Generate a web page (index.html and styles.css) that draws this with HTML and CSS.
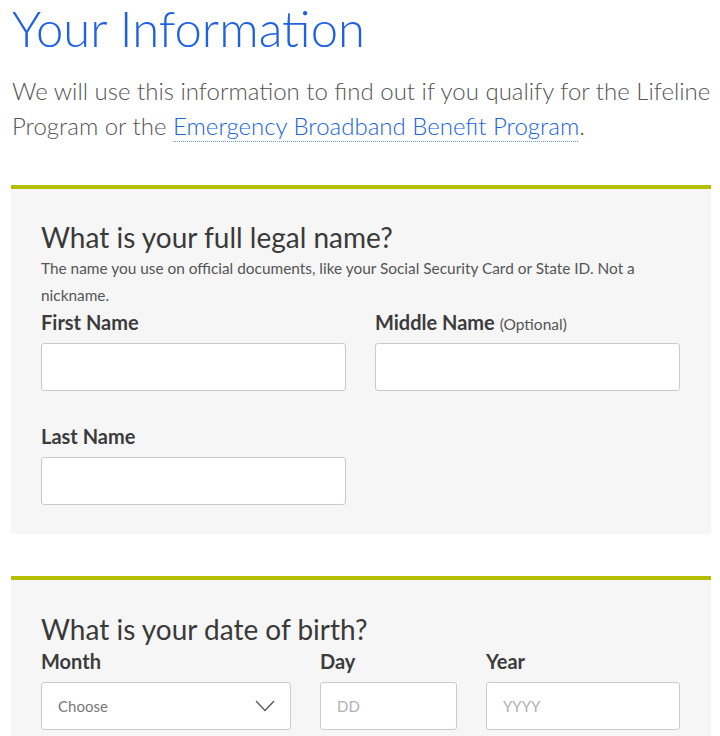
FILE: index.html
```html
<!DOCTYPE html>
<html lang="en">
<head>
<meta charset="utf-8">
<title>Your Information</title>
<link rel="stylesheet" href="styles.css">
</head>
<body>
<main class="page">
  <h1 class="title">Your Information</h1>
  <p class="intro">We will use this information to find out if you qualify for the Lifeline Program or the <a href="#" class="intro-link">Emergency Broadband Benefit Program</a>.</p>

  <section class="card">
    <h2 class="card-title">What is your full legal name?</h2>
    <p class="card-desc">The name you use on official documents, like your Social Security Card or State ID. Not a nickname.</p>
    <div class="name-grid">
      <label class="field">
        <span class="label">First Name</span>
        <input class="input" type="text">
      </label>
      <label class="field">
        <span class="label">Middle Name <span class="optional">(Optional)</span></span>
        <input class="input" type="text">
      </label>
      <label class="field field-last">
        <span class="label">Last Name</span>
        <input class="input" type="text">
      </label>
    </div>
  </section>

  <section class="card card-dob">
    <h2 class="card-title">What is your date of birth?</h2>
    <div class="dob-grid">
      <label class="field">
        <span class="label">Month</span>
        <span class="select">
          <span class="select-text">Choose</span>
          <svg class="chevron" width="20" height="12" viewBox="0 0 20 12"><path d="M1 1 L10 10.5 L19 1" fill="none" stroke="#555" stroke-width="1.3"/></svg>
        </span>
      </label>
      <label class="field">
        <span class="label">Day</span>
        <input class="input" type="text" placeholder="DD">
      </label>
      <label class="field">
        <span class="label">Year</span>
        <input class="input" type="text" placeholder="YYYY">
      </label>
    </div>
  </section>
</main>
</body>
</html>
```

FILE: styles.css
```css
* { box-sizing: border-box; }
html, body { margin: 0; padding: 0; background: #fff; }
body {
  font-family: "Lato", "Open Sans", sans-serif;
  color: #3d3d3d;
}
.page {
  padding: 0 9px 0 11px;
}
.title {
  margin: 0;
  font-size: 49px;
  line-height: 56px;
  font-weight: 300;
  color: #1f62e0;
  padding-left: 1px;
}
.intro {
  margin: 17px 0 0 1px;
  font-size: 24px;
  line-height: 35px;
  font-weight: 300;
  color: #555;
}
.intro-link {
  color: #2063dd;
  text-decoration: underline dotted #6f9be8;
  text-decoration-thickness: 1px;
  text-underline-offset: 6px;
}
.card {
  margin-top: 42px;
  background: #f6f6f6;
  border-top: 4px solid #b5bd00;
  padding: 31px 31px 29px 30px;
}
.card-dob {
  margin-top: 42px;
  padding-top: 32px;
}
.card-title {
  margin: 0;
  font-size: 28px;
  line-height: 34px;
  font-weight: 400;
  color: #3a3a3a;
}
.card-desc {
  margin: 1px 0 0;
  font-size: 15.4px;
  line-height: 27px;
  color: #555;
}
.name-grid {
  display: grid;
  grid-template-columns: minmax(0, 1fr) minmax(0, 1fr);
  column-gap: 29px;
  row-gap: 31px;
  margin-top: -1px;
}
.dob-grid {
  display: grid;
  grid-template-columns: minmax(0, 250fr) minmax(0, 137fr) minmax(0, 194fr);
  column-gap: 29px;
  margin-top: 1px;
}
.field {
  display: flex;
  flex-direction: column;
  min-width: 0;
}
.field-last {
  grid-column: 1;
}
.label {
  display: block;
  height: 28px;
  font-size: 20px;
  line-height: 28px;
  font-weight: 700;
  color: #3c3c3c;
  margin-bottom: 7px;
}
.optional {
  font-size: 15.5px;
  line-height: 1;
  font-weight: 400;
  color: #555;
}
.input, .select {
  width: 100%;
  min-width: 0;
  height: 48px;
  border: 1px solid #cbcbcb;
  border-radius: 3px;
  background: #fff;
  font-family: inherit;
  font-size: 15px;
  padding: 0 16px;
  color: #333;
}
.input::placeholder { color: #b0b0b0; }
.select {
  display: flex;
  align-items: center;
  justify-content: space-between;
}
.select-text { color: #777; }
.chevron { margin-right: -1px; }
```
